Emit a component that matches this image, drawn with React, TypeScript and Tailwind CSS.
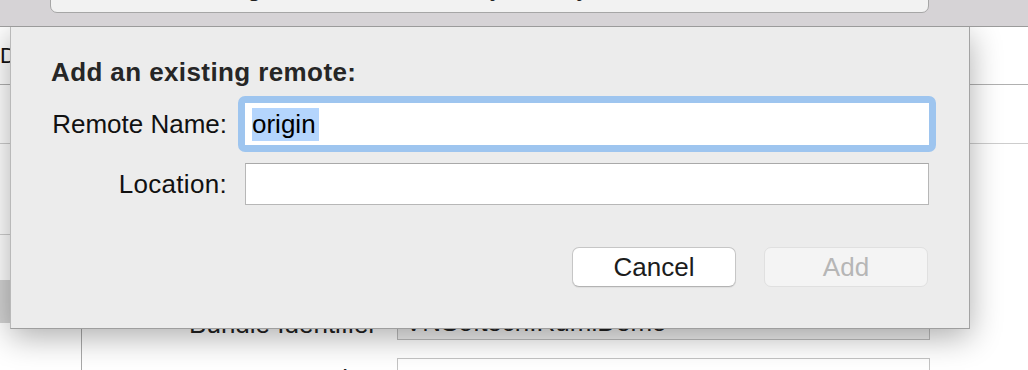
import React from "react";

export default function App() {
  return (
    <div className="relative w-[1028px] h-[370px] overflow-hidden bg-white font-['Liberation_Sans',Arial,sans-serif] text-[#111]">
      {/* Background window */}
      <div className="flex flex-col h-full">
        <div className="relative z-20 h-[27px] shrink-0 bg-[#d6d3d6] border-b border-[#9b9b9b]">
          <div className="absolute left-[50px] -top-[30px] w-[879px] h-[43px] bg-[#f2f2f2] border border-[#a6a6a6] rounded-b-[7px] flex items-end pb-[10px] pl-[196px] overflow-hidden">
            <span className="text-[26px] leading-[30px] text-[#222] whitespace-nowrap">git Xcode Remote: My Library</span>
          </div>
        </div>
        <div className="h-[58px] shrink-0 border-b border-[#b0b0b0] pt-[16px]">
          <span className="text-[22px] leading-[26px] text-[#111]">D</span>
        </div>
        <div className="h-[59px] shrink-0 border-b border-[#cdcdcd]" />
        <div className="flex flex-1">
          <div className="w-[82px] shrink-0 border-r border-[#a9a9a9] flex flex-col">
            <div className="h-[91px] border-b border-[#cfcfcf]" />
            <div className="mt-[45px] h-[43px] bg-[#d3d3d3]" />
          </div>
          <div className="flex-1 flex flex-col pt-[154px]">
            <div className="flex items-end gap-[20px]">
              <div className="w-[295px] text-right text-[26px] leading-[30px] pb-[1px] text-[#222] whitespace-nowrap">Bundle Identifier</div>
              <div className="w-[533px] h-[42px] bg-[#f0f0f0] border border-[#bdbdbd] flex items-end pb-[2px] pl-[7px]">
                <span className="text-[26px] leading-[30px] text-[#222]">VNSoftech.RumiDemo</span>
              </div>
            </div>
            <div className="flex items-center gap-[20px] mt-[18px]">
              <div className="w-[295px] text-right text-[26px] leading-[30px] text-[#222]">Version</div>
              <div className="w-[533px] h-[42px] bg-white border border-[#c4c4c4] flex items-center pl-[7px]">
                <span className="text-[26px] leading-[30px] text-[#222]">1.0</span>
              </div>
            </div>
          </div>
        </div>
      </div>

      {/* Sheet dialog */}
      <div className="absolute z-10 left-[10px] top-[27px] w-[960px] h-[302px] bg-[#ececec] border-l border-r border-b border-l-[#b9b9b9] border-r-[#a3a3a3] border-b-[#9e9e9e] shadow-[0_8px_30px_rgba(0,0,0,0.32)] flex flex-col pl-[40px] pr-[40px] pt-[30px]">
        <div className="text-[26px] leading-[30px] font-bold tracking-[0.4px] text-[#262626] whitespace-nowrap">Add an existing remote:</div>
        <div className="mt-[16px] grid grid-cols-[176px_684px] gap-x-[18px] gap-y-[18px] items-center">
          <div className="text-right text-[26px] leading-[30px] text-[#111] whitespace-nowrap">Remote Name:</div>
          <div className="relative h-[42px] bg-white flex items-center pl-[7px]">
            <div className="absolute -inset-[7px] rounded-[7px] border-[7px] border-[#9ec5ef]" />
            <span className="bg-[#b4d5fd] text-[26px] leading-[33px] pr-[3px] text-black">origin</span>
          </div>
          <div className="text-right text-[26px] leading-[30px] tracking-[0.3px] text-[#111] whitespace-nowrap">Location:</div>
          <div className="h-[42px] bg-white border border-[#b7b7b7] border-t-[#a9a9a9]" />
        </div>
        <div className="mt-[42px] flex justify-end gap-[28px] mr-[1px]">
          <button className="w-[164px] h-[40px] bg-white border border-[#c6c6c6] border-b-[#b3b3b3] rounded-[7px] shadow-[0_1px_1px_rgba(0,0,0,0.06)] text-[26px] leading-[30px] text-[#1c1c1c]">
            Cancel
          </button>
          <button className="w-[164px] h-[40px] bg-[#f4f4f4] border border-[#e0e0e0] rounded-[7px] text-[26px] leading-[30px] text-[#b6b6b6]">
            Add
          </button>
        </div>
      </div>
    </div>
  );
}
